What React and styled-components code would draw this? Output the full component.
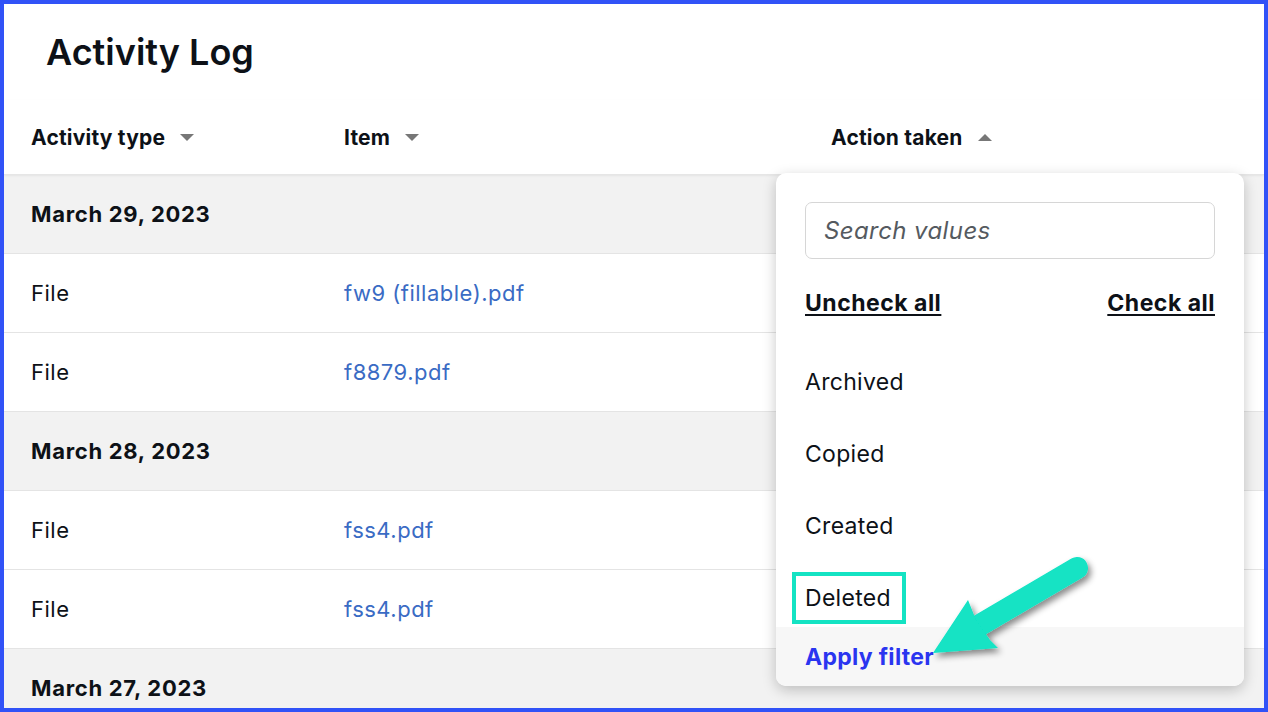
import React from "react";
import styled, { createGlobalStyle } from "styled-components";

const GlobalStyle = createGlobalStyle`
  html, body {
    margin: 0;
    padding: 0;
    background: #ffffff;
  }
  body {
    font-family: Inter, "Noto Sans", "Liberation Sans", sans-serif;
    color: #0d1117;
  }
`;

const Frame = styled.div`
  position: relative;
  box-sizing: border-box;
  width: 1268px;
  height: 712px;
  border: 4px solid #3152f7;
  background: #ffffff;
  overflow: hidden;
`;

const Title = styled.h1`
  margin: 0;
  height: 96px;
  box-sizing: border-box;
  padding: 26px 0 0 42px;
  font-size: 36px;
  line-height: 44px;
  font-weight: 600;
`;

const Columns = styled.div`
  display: grid;
  grid-template-columns: 313px 487px 1fr;
  align-items: center;
  padding-left: 27px;
`;

const HeaderRow = styled(Columns)`
  height: 74px;
  border-bottom: 1px solid #e6e6e6;
  box-shadow: 0 1px 2px rgba(0, 0, 0, 0.06);
  position: relative;
  z-index: 1;
`;

const HeaderCell = styled.div`
  display: flex;
  align-items: center;
  gap: 15px;
  font-size: 21px;
  font-weight: 700;
  letter-spacing: 0.2px;
`;

const Caret = styled.span`
  width: 0;
  height: 0;
  border-left: 7px solid transparent;
  border-right: 7px solid transparent;
  ${(p) =>
    p.$up
      ? "border-bottom: 7px solid #777777;"
      : "border-top: 7px solid #777777;"}
`;

const GroupRow = styled.div`
  height: 78px;
  display: flex;
  align-items: center;
  padding-left: 27px;
  background: #f2f2f2;
  border-bottom: 1px solid #e4e4e4;
  font-size: 22px;
  font-weight: 700;
  letter-spacing: 0.7px;
`;

const DataRow = styled(Columns)`
  height: 78px;
  border-bottom: 1px solid #e4e4e4;
  font-size: 22px;
  letter-spacing: 0.5px;
`;

const FileLink = styled.a`
  color: #3a6bc4;
  text-decoration: none;
`;

const Dropdown = styled.div`
  position: absolute;
  left: 772px;
  top: 169px;
  width: 468px;
  height: 513px;
  box-sizing: border-box;
  background: #ffffff;
  border-radius: 10px;
  box-shadow: 0 4px 14px rgba(0, 0, 0, 0.22);
  display: flex;
  flex-direction: column;
  overflow: hidden;
  z-index: 2;
`;

const Body = styled.div`
  flex: 1;
  min-height: 0;
  display: flex;
  flex-direction: column;
  padding: 29px 29px 0;
  overflow: hidden;
`;

const SearchInput = styled.input`
  flex-shrink: 0;
  box-sizing: border-box;
  height: 57px;
  width: 100%;
  border: 1px solid #d6d6d6;
  border-radius: 7px;
  padding: 0 18px;
  font-family: inherit;
  font-size: 24px;
  letter-spacing: 0.4px;
  color: #0d1117;
  outline: none;
  &::placeholder {
    color: #555a60;
    font-style: italic;
  }
`;

const Actions = styled.div`
  flex-shrink: 0;
  display: flex;
  justify-content: space-between;
  margin-top: 32px;
  height: 24px;
  align-items: center;
`;

const ActionLink = styled.a`
  font-size: 23px;
  font-weight: 700;
  letter-spacing: 0.5px;
  color: #0d1117;
  text-decoration: underline;
  text-underline-offset: 3px;
  text-decoration-thickness: 2px;
`;

const OptionList = styled.div`
  flex-shrink: 0;
  margin-top: 31px;
`;

const Option = styled.div`
  height: 72px;
  display: flex;
  align-items: center;
  font-size: 23px;
  letter-spacing: 0.3px;
`;

const Highlight = styled.span`
  display: inline-block;
  border: 4px solid #14e3c3;
  padding: 10px 11px 10px 9px;
  margin-left: -13px;
  line-height: 24px;
`;

const Footer = styled.div`
  height: 59px;
  flex-shrink: 0;
  display: flex;
  align-items: center;
  padding-left: 29px;
  background: #f7f7f7;
`;

const ApplyButton = styled.button`
  border: none;
  background: none;
  padding: 0;
  font-family: inherit;
  font-size: 23px;
  font-weight: 700;
  letter-spacing: 0.3px;
  color: #2a35f0;
  cursor: pointer;
`;

const Pointer = styled.svg`
  position: absolute;
  left: -4px;
  top: -4px;
  width: 1268px;
  height: 712px;
  pointer-events: none;
  z-index: 3;
`;

const groups = [
  {
    date: "March 29, 2023",
    rows: [
      { type: "File", item: "fw9 (fillable).pdf" },
      { type: "File", item: "f8879.pdf" },
    ],
  },
  {
    date: "March 28, 2023",
    rows: [
      { type: "File", item: "fss4.pdf" },
      { type: "File", item: "fss4.pdf" },
    ],
  },
  { date: "March 27, 2023", rows: [] },
];

const options = ["Archived", "Copied", "Created", "Deleted"];

const App = () => {
  return (
    <>
      <GlobalStyle />
      <Frame>
        <Title>Activity Log</Title>
        <HeaderRow>
          <HeaderCell>
            Activity type <Caret />
          </HeaderCell>
          <HeaderCell>
            Item <Caret />
          </HeaderCell>
          <HeaderCell>
            Action taken <Caret $up />
          </HeaderCell>
        </HeaderRow>
        {groups.map((g) => (
          <React.Fragment key={g.date}>
            <GroupRow>{g.date}</GroupRow>
            {g.rows.map((r, i) => (
              <DataRow key={i}>
                <div>{r.type}</div>
                <FileLink href="#">{r.item}</FileLink>
                <div />
              </DataRow>
            ))}
          </React.Fragment>
        ))}

        <Dropdown>
          <Body>
            <SearchInput placeholder="Search values" />
            <Actions>
              <ActionLink href="#">Uncheck all</ActionLink>
              <ActionLink href="#">Check all</ActionLink>
            </Actions>
            <OptionList>
              {options.map((o) => (
                <Option key={o}>
                  {o === "Deleted" ? <Highlight>{o}</Highlight> : o}
                </Option>
              ))}
            </OptionList>
          </Body>
          <Footer>
            <ApplyButton>Apply filter</ApplyButton>
          </Footer>
        </Dropdown>

        <Pointer viewBox="0 0 1268 712">
          <defs>
            <filter id="arrowShadow" x="-20%" y="-20%" width="140%" height="140%">
              <feDropShadow dx="3" dy="4" stdDeviation="3" floodColor="#000" floodOpacity="0.45" />
            </filter>
          </defs>
          <g filter="url(#arrowShadow)" fill="#12e3c4">
            <line
              x1="1077"
              y1="568"
              x2="980"
              y2="625"
              stroke="#12e3c4"
              strokeWidth="22"
              strokeLinecap="round"
            />
            <polygon points="933,653 968,600 976,620 990,640 998,648" />
          </g>
        </Pointer>
      </Frame>
    </>
  );
};

export default App;
